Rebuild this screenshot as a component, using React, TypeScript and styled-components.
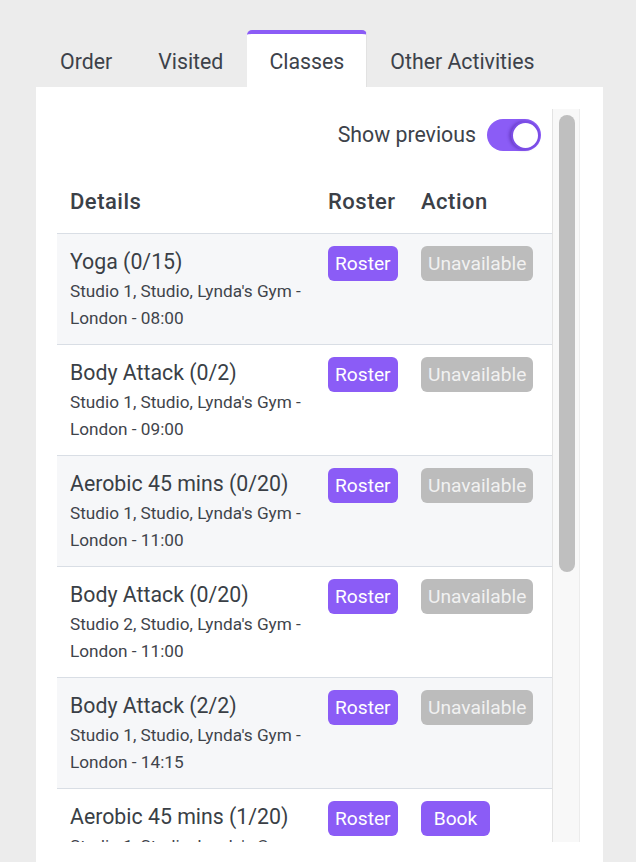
import React from 'react';
import styled, { createGlobalStyle } from 'styled-components';

const Global = createGlobalStyle`
  html, body { margin: 0; padding: 0; background: #ececec; }
  body { font-family: Roboto, "Noto Sans", Arial, sans-serif; color: #3d424a; }
  * { box-sizing: border-box; }
`;

const Page = styled.div`
  height: 862px;
  padding: 30px 33px 0 36px;
  display: flex;
  flex-direction: column;
`;

const TabBar = styled.div`
  display: flex;
  align-items: flex-end;
  gap: 1px;
  padding-left: 2px;
`;

const Tab = styled.div<{ $active?: boolean }>`
  height: 57px;
  padding: 16px 22px 0;
  font-size: 21.3px;
  line-height: 24px;
  color: #3d424a;
  border-top: 4px solid ${(p) => (p.$active ? '#8b5cf6' : 'transparent')};
  border-right: 1px solid ${(p) => (p.$active ? '#e2e2e2' : 'transparent')};
  border-radius: 5px 5px 0 0;
  background: ${(p) => (p.$active ? '#ffffff' : 'transparent')};
  white-space: nowrap;
`;

const Panel = styled.div`
  flex: 1;
  min-height: 0;
  background: #ffffff;
  padding: 22px 23px 20px 21px;
  display: flex;
`;

const Scroller = styled.div`
  flex: 1;
  min-width: 0;
  overflow: hidden;
`;

const ScrollTrack = styled.div`
  width: 28px;
  flex: none;
  background: #f8f8f8;
  border-left: 1px solid #e3e3e3;
  border-right: 1px solid #ececec;
  padding: 6px 4px 0 6px;
`;

const ScrollThumb = styled.div`
  height: 457px;
  border-radius: 8px;
  background: #bfbfbf;
`;

const ToggleBar = styled.div`
  height: 42px;
  padding: 10px 11px 0 0;
  display: flex;
  justify-content: flex-end;
  align-items: flex-start;
  gap: 11px;
`;

const ToggleLabel = styled.span`
  font-size: 21.3px;
  line-height: 32px;
  color: #3d424a;
`;

const Switch = styled.div`
  position: relative;
  width: 54px;
  height: 32px;
  border-radius: 16px;
  background: #8b5cf6;
`;

const Knob = styled.div`
  position: absolute;
  top: 1.5px;
  right: 1.5px;
  width: 29px;
  height: 29px;
  border-radius: 50%;
  background: #ffffff;
  border: 2px solid #7b4de6;
  box-shadow: -2px 0 3px rgba(70, 30, 150, 0.45);
`;

const Grid = styled.div`
  display: grid;
  grid-template-columns: 259px 93px 1fr;
  border-bottom: 1px solid #d9dee5;
`;

const HeaderRow = styled(Grid)`
  height: 83px;
  align-items: end;
`;

const HeadCell = styled.div`
  padding: 0 12px 17px 13px;
  font-size: 22px;
  font-weight: 500;
  letter-spacing: 0.5px;
  line-height: 28px;
  color: #3b4047;
  &:not(:first-child) { padding-left: 12px; }
`;

const Row = styled(Grid)<{ $shaded?: boolean }>`
  height: 111px;
  align-items: start;
  padding-top: 12px;
  background: ${(p) => (p.$shaded ? '#f6f7f9' : '#ffffff')};
`;

const Cell = styled.div`
  padding: 0 12px 0 13px;
  &:not(:first-child) { padding-left: 12px; }
`;

const Title = styled.div`
  margin-top: 1px;
  font-size: 21.3px;
  line-height: 30px;
  color: #3a3f46;
`;

const Sub = styled.div`
  margin-top: 1px;
  font-size: 17.2px;
  line-height: 26.5px;
  color: #3f444b;
`;

const Button = styled.button<{ $variant: 'primary' | 'disabled' }>`
  height: 35px;
  min-width: 69px;
  padding: 0 7px;
  border: none;
  border-radius: 6px;
  font-family: inherit;
  font-size: 19.2px;
  line-height: 35px;
  text-align: center;
  white-space: nowrap;
  color: ${(p) => (p.$variant === 'primary' ? '#ffffff' : '#f1f1f1')};
  background: ${(p) => (p.$variant === 'primary' ? '#8b5cf6' : '#bcbcbc')};
`;

type ClassItem = { name: string; studio: string; time: string; bookable: boolean };

const classes: ClassItem[] = [
  { name: 'Yoga (0/15)', studio: 'Studio 1', time: '08:00', bookable: false },
  { name: 'Body Attack (0/2)', studio: 'Studio 1', time: '09:00', bookable: false },
  { name: 'Aerobic 45 mins (0/20)', studio: 'Studio 1', time: '11:00', bookable: false },
  { name: 'Body Attack (0/20)', studio: 'Studio 2', time: '11:00', bookable: false },
  { name: 'Body Attack (2/2)', studio: 'Studio 1', time: '14:15', bookable: false },
  { name: 'Aerobic 45 mins (1/20)', studio: 'Studio 1', time: '16:00', bookable: true },
];

const tabs = ['Order', 'Visited', 'Classes', 'Other Activities'];

export default function App() {
  return (
    <>
      <Global />
      <Page>
        <TabBar>
          {tabs.map((t) => (
            <Tab key={t} $active={t === 'Classes'}>{t}</Tab>
          ))}
        </TabBar>
        <Panel>
          <Scroller>
            <ToggleBar>
              <ToggleLabel>Show previous</ToggleLabel>
              <Switch><Knob /></Switch>
            </ToggleBar>
            <HeaderRow>
              <HeadCell>Details</HeadCell>
              <HeadCell>Roster</HeadCell>
              <HeadCell>Action</HeadCell>
            </HeaderRow>
            {classes.map((c, i) => (
              <Row key={i} $shaded={i % 2 === 0}>
                <Cell>
                  <Title>{c.name}</Title>
                  <Sub>{`${c.studio}, Studio, Lynda's Gym - London - ${c.time}`}</Sub>
                </Cell>
                <Cell>
                  <Button $variant="primary">Roster</Button>
                </Cell>
                <Cell>
                  {c.bookable ? (
                    <Button $variant="primary">Book</Button>
                  ) : (
                    <Button $variant="disabled">Unavailable</Button>
                  )}
                </Cell>
              </Row>
            ))}
          </Scroller>
          <ScrollTrack>
            <ScrollThumb />
          </ScrollTrack>
        </Panel>
      </Page>
    </>
  );
}
